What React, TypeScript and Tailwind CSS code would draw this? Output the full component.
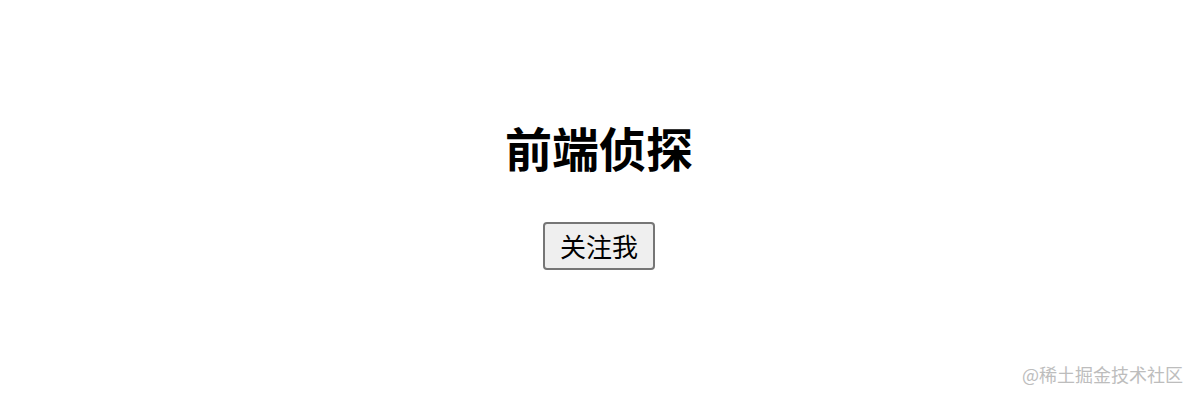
import React from 'react';

const cjk = "font-['Noto_Sans_CJK_SC','Noto_Sans',sans-serif]";

export default function App() {
  return (
    <div className={`relative h-[400px] w-full bg-white ${cjk}`}>
      <div className="flex flex-col items-center pt-[115px]">
        <h1 className="text-[47px] font-bold leading-[64px] text-black">前端侦探</h1>
        <button className="mt-[43px] h-[48px] w-[112px] rounded-[4px] border-2 border-[#767676] bg-[#efefef] text-[26px] leading-none text-black">
          关注我
        </button>
      </div>
      <div className="absolute bottom-[14px] right-[15px] text-[18px] leading-[24px] text-[#bdbdbd]">
        @稀土掘金技术社区
      </div>
    </div>
  );
}
